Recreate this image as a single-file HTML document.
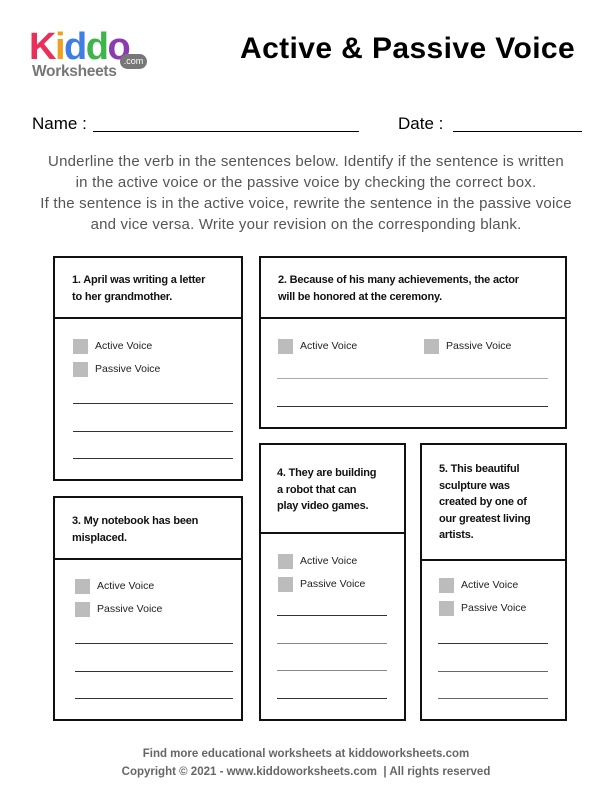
<!DOCTYPE html>
<html><head><meta charset="utf-8"><style>
*{margin:0;padding:0;box-sizing:border-box}
body{width:612px;height:792px;background:#fff;position:relative;font-family:"Liberation Sans",sans-serif;overflow:hidden}
.a{position:absolute;white-space:nowrap}
.box{position:absolute;border:2.5px solid #111}
.div{position:absolute;left:0;right:0;border-top:2.5px solid #111}
.q{position:absolute;font-size:11px;font-weight:bold;line-height:16.5px;color:#111;letter-spacing:-0.2px;white-space:nowrap}
.cb{position:absolute;width:15px;height:15px;background:#bcbcbc}
.lb{position:absolute;font-size:10.5px;color:#222}
.ln{position:absolute;height:0;border-top:1px solid #333}
.ft{position:absolute;left:0;width:612px;text-align:center;font-size:11.5px;font-weight:bold;color:#666}
</style></head><body>
<div class="a" style="left:29px;top:28px;font-size:38px;font-weight:bold;letter-spacing:-1.5px;line-height:38px"><span style="color:#e8305a">K</span><span style="color:#f0a020">i</span><span style="color:#3e7fe6">d</span><span style="color:#3db54a">d</span><span style="color:#8a3cb0">o</span></div>
<div class="a" style="left:32px;top:63px;font-size:15.5px;font-weight:bold;color:#777;letter-spacing:-0.3px">Worksheets</div>
<div class="a" style="left:120px;top:54px;width:27px;height:15px;border-radius:8px;background:#777;color:#fff;font-size:9px;text-align:center;line-height:15px">.com</div>
<div class="a" style="left:240px;top:32px;font-size:30px;font-weight:bold;letter-spacing:0.4px;color:#000">Active &amp; Passive Voice</div>
<div class="a" style="left:32px;top:114px;font-size:17px;color:#000">Name :</div>
<div class="ln" style="left:93px;top:131px;width:266px;border-top-color:#000"></div>
<div class="a" style="left:398px;top:114px;font-size:17px;color:#000">Date :</div>
<div class="ln" style="left:453px;top:131px;width:129px;border-top-color:#000"></div>
<div class="a" style="left:0;top:151px;width:612px;text-align:center;font-size:15px;letter-spacing:0.2px;line-height:21px;color:#555;white-space:normal">Underline the verb in the sentences below. Identify if the sentence is written<br>in the active voice or the passive voice by checking the correct box.<br>If the sentence is in the active voice, rewrite the sentence in the passive voice<br>and vice versa. Write your revision on the corresponding blank.</div>

<div class="box" style="left:53px;top:256px;width:190px;height:225px"><div class="div" style="top:59px"></div></div>
<div class="q" style="left:72px;top:272px">1. April was writing a letter<br>to her grandmother.</div>
<div class="cb" style="left:73px;top:339px"></div><div class="lb" style="left:95px;top:340px">Active Voice</div>
<div class="cb" style="left:73px;top:362px"></div><div class="lb" style="left:95px;top:363px">Passive Voice</div>
<div class="ln" style="left:73px;top:403px;width:160px"></div>
<div class="ln" style="left:73px;top:431px;width:160px"></div>
<div class="ln" style="left:73px;top:458px;width:160px"></div>

<div class="box" style="left:259px;top:256px;width:308px;height:173px"><div class="div" style="top:59px"></div></div>
<div class="q" style="left:278px;top:272px">2. Because of his many achievements, the actor<br>will be honored at the ceremony.</div>
<div class="cb" style="left:278px;top:339px"></div><div class="lb" style="left:300px;top:340px">Active Voice</div>
<div class="cb" style="left:424px;top:339px"></div><div class="lb" style="left:446px;top:340px">Passive Voice</div>
<div class="ln" style="left:277px;top:378px;width:271px;border-top-color:#aaa"></div>
<div class="ln" style="left:277px;top:406px;width:271px"></div>

<div class="box" style="left:53px;top:496px;width:190px;height:225px"><div class="div" style="top:60px"></div></div>
<div class="q" style="left:72px;top:513px">3. My notebook has been<br>misplaced.</div>
<div class="cb" style="left:75px;top:579px"></div><div class="lb" style="left:97px;top:580px">Active Voice</div>
<div class="cb" style="left:75px;top:602px"></div><div class="lb" style="left:97px;top:603px">Passive Voice</div>
<div class="ln" style="left:75px;top:643px;width:158px"></div>
<div class="ln" style="left:75px;top:671px;width:158px"></div>
<div class="ln" style="left:75px;top:698px;width:158px"></div>

<div class="box" style="left:259px;top:443px;width:147px;height:278px"><div class="div" style="top:87px"></div></div>
<div class="q" style="left:277px;top:465px">4. They are building<br>a robot that can<br>play video games.</div>
<div class="cb" style="left:278px;top:554px"></div><div class="lb" style="left:300px;top:555px">Active Voice</div>
<div class="cb" style="left:278px;top:577px"></div><div class="lb" style="left:300px;top:578px">Passive Voice</div>
<div class="ln" style="left:277px;top:615px;width:110px"></div>
<div class="ln" style="left:277px;top:643px;width:110px;border-top-color:#888"></div>
<div class="ln" style="left:277px;top:670px;width:110px;border-top-color:#888"></div>
<div class="ln" style="left:277px;top:698px;width:110px"></div>

<div class="box" style="left:420px;top:443px;width:147px;height:278px"><div class="div" style="top:114px"></div></div>
<div class="q" style="left:439px;top:461px">5. This beautiful<br>sculpture was<br>created by one of<br>our greatest living<br>artists.</div>
<div class="cb" style="left:439px;top:578px"></div><div class="lb" style="left:461px;top:579px">Active Voice</div>
<div class="cb" style="left:439px;top:601px"></div><div class="lb" style="left:461px;top:602px">Passive Voice</div>
<div class="ln" style="left:438px;top:643px;width:110px"></div>
<div class="ln" style="left:438px;top:671px;width:110px;border-top-color:#666"></div>
<div class="ln" style="left:438px;top:698px;width:110px;border-top-color:#666"></div>

<div class="ft" style="top:748px">Find more educational worksheets at kiddoworksheets.com</div>
<div class="ft" style="top:766px">Copyright © 2021 - www.kiddoworksheets.com &nbsp;| All rights reserved</div>
</body></html>
